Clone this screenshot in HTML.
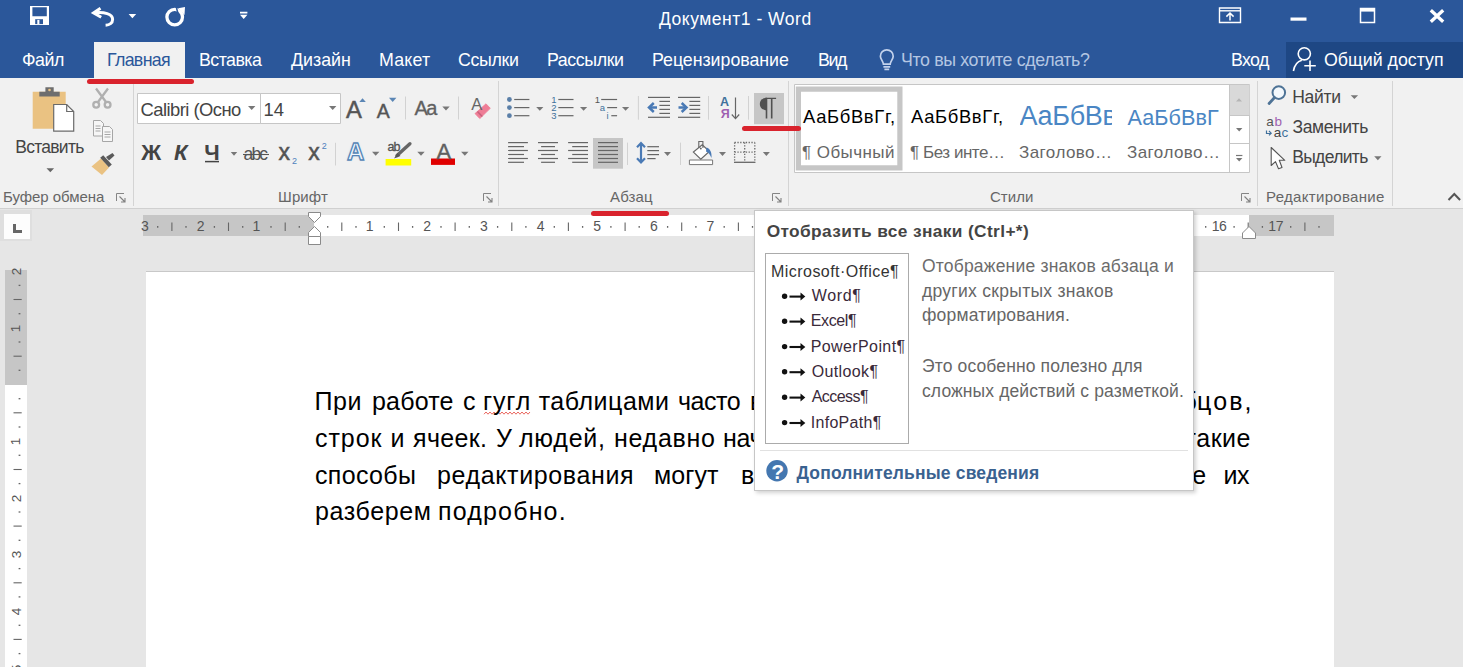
<!DOCTYPE html>
<html lang="ru"><head><meta charset="utf-8"><title>Документ1 - Word</title>
<style>
*{margin:0;padding:0;box-sizing:border-box}
html,body{width:1463px;height:667px;overflow:hidden;background:#e6e6e6;font-family:"Liberation Sans",sans-serif}
.a{position:absolute}
.t{position:absolute;white-space:pre;line-height:1;display:block}
.red{position:absolute;background:#d9232d;border-radius:3px}
.sep{position:absolute;width:1px;background:#d4d4d4}
.isep{position:absolute;width:1px;background:#d0d0d0}
svg{position:absolute;overflow:visible}
</style></head>
<body>
<div class="a" style="left:0;top:0;width:1463px;height:77.5px;background:#2b579a"></div>
<div class="a" style="left:94px;top:42px;width:91px;height:36px;background:#f1f1f1"></div>
<div class="a" style="left:1286px;top:42px;width:177px;height:35.5px;background:#1e4784"></div>
<div class="a" style="left:0;top:77.5px;width:1463px;height:131.5px;background:#f1f1f1;border-bottom:1px solid #d0d0d0"></div>
<div class="sep" style="left:132.5px;top:81px;height:124.5px"></div>
<div class="sep" style="left:498px;top:81px;height:124.5px"></div>
<div class="sep" style="left:787.5px;top:81px;height:124.5px"></div>
<div class="sep" style="left:1257px;top:81px;height:124.5px"></div>
<div class="sep" style="left:1392px;top:81px;height:124.5px"></div>
<svg width="1463" height="667" viewBox="0 0 1463 667" style="left:0;top:0"><path d="M30 6h19v19h-19z M32.4 7.2v9h14.4v-9z" fill="#fff" fill-rule="evenodd"/><path d="M35.2 19.2h7.800v4.900h-7.800z" fill="#2b579a"/><path d="M37.300 19.900h2.100v4.200h-2.100z" fill="#fff"/><path d="M100.5 8.2 L93.6 12.8 L101.2 17.2" fill="none" stroke="#fff" stroke-width="3" stroke-linejoin="miter"/><path d="M95 12.8 C104 11.8 112.6 13.8 112.6 19.4 C112.6 23 109.5 25 105.6 25.2" fill="none" stroke="#fff" stroke-width="3"/><path d="M128.6 14h7.6l-3.8 4.2z" fill="#fff"/><circle cx="174.700" cy="17.100" r="7.800" fill="none" stroke="#fff" stroke-width="3.300"/><path d="M178.300 8.200L185 7 184.500 15Z" fill="#fff"/><path d="M176.500 8l2 7.200" stroke="#2b579a" stroke-width="1.500"/><path d="M240 11.8h7.4v1.6h-7.4z M240 14.8h7.4l-3.7 4.2z" fill="#fff"/><path d="M1219.5 8h21v14.5h-21z" fill="none" stroke="#fff" stroke-width="1.4"/><path d="M1219.5 10.8h21" stroke="#fff" stroke-width="1.4"/><path d="M1230 13.2v7.2 M1226.4 16.6l3.6-3.6 3.6 3.6" fill="none" stroke="#fff" stroke-width="1.5"/><path d="M1290.5 17.5h16v3.2h-16z" fill="#fff"/><path d="M1360.5 8.5h14v14h-14z" fill="none" stroke="#fff" stroke-width="1.5"/><path d="M1360 8h15v3.6h-15z" fill="#fff"/><path d="M1430.800 10.200l12.400 11.600M1443.200 10.200l-12.400 11.600" stroke="#fff" stroke-width="3.300"/><path d="M886.800 49.800a6.400 6.400 0 0 1 6.400 6.400c0 3-2.600 4.600-3 8h-6.800c-.400-3.400-3-5-3-8a6.400 6.400 0 0 1 6.400-6.400z" fill="none" stroke="#c3d2ec" stroke-width="1.700"/><path d="M883.400 66.900h6.800M884.400 69.300h4.800" stroke="#c3d2ec" stroke-width="1.700"/><circle cx="1304.300" cy="53.800" r="6.100" fill="none" stroke="#fff" stroke-width="1.600"/><path d="M1293.400 71c1-6 4-9.600 8.400-10.800" fill="none" stroke="#fff" stroke-width="1.600"/><path d="M1310 60.500v10.500M1304.300 65.700h11.500" stroke="#fff" stroke-width="1.600"/><path d="M32.700 91.7h33v37h-33z" fill="#eac282"/><path d="M39.300 91.7h20.400v4.800h-20.400z M45.400 87.200h8.300v4.600h-8.300z" fill="#6e6e6e"/><circle cx="49.500" cy="90" r="1.3" fill="#eac282"/><path d="M53.700 104.500h13l7 7v19.700h-20z" fill="#fff" stroke="#6a6a6a" stroke-width="1.2"/><path d="M66.700 104.500v7h7" fill="none" stroke="#6a6a6a" stroke-width="1.2"/><path d="M46.5 168.3h7.6l-3.8 4z" fill="#666"/><g fill="none" stroke="#b0b0b0" stroke-width="2.300"><path d="M96 88.500l10 13.500M108 88.500l-10 13.500"/><circle cx="96.200" cy="104.800" r="2.900"/><circle cx="107.600" cy="104.800" r="2.900"/></g><g fill="#f6f6f6" stroke="#a6a6a6" stroke-width="1"><path d="M93.500 120.500h7l3 3v12.500h-10z"/><path d="M102.500 126.500h7l3 3v12h-10z"/></g><path d="M95.500 126h5M95.500 128.500h5M95.500 131h5M104.500 132h6M104.500 134.500h6M104.500 137h6" stroke="#a6a6a6" stroke-width="1"/><path d="M91.500 166.500l9.500-8 8 9-7 7.500z" fill="#eac282"/><path d="M100.200 157.800l3-2.600 8.600 9.400-3 2.600z" fill="#5a5a5a"/><path d="M106 157l6.500-4 2 2.500-5.500 5z" fill="#5a5a5a"/><path d="M124 193.5h-7.500v7.500" fill="none" stroke="#858585" stroke-width="1"/><path d="M119.5 196.5l5 5M125 198v4h-4" fill="none" stroke="#808080" stroke-width="1.100"/><path d="M491 193.5h-7.500v7.500" fill="none" stroke="#858585" stroke-width="1"/><path d="M486.5 196.5l5 5M492 198v4h-4" fill="none" stroke="#808080" stroke-width="1.100"/><path d="M780 193.5h-7.500v7.500" fill="none" stroke="#858585" stroke-width="1"/><path d="M775.5 196.5l5 5M781 198v4h-4" fill="none" stroke="#808080" stroke-width="1.100"/><path d="M1249 193.5h-7.500v7.500" fill="none" stroke="#858585" stroke-width="1"/><path d="M1244.5 196.5l5 5M1250 198v4h-4" fill="none" stroke="#808080" stroke-width="1.100"/><path d="M1448.500 200l5.800-6 5.800 6" fill="none" stroke="#555" stroke-width="2"/><path d="M137.500 93.500h123v30h-123z M260.500 93.500h80v30h-80z" fill="#fff" stroke="#c6c6c6" stroke-width="1"/><path d="M248 106h7.4l-3.7 3.9z" fill="#777"/><path d="M329 106h7.4l-3.7 3.9z" fill="#777"/><path d="M359.300 101.900l3.250-3.700 3.250 3.700z" fill="#5b86b5"/><path d="M389 97.800h7.400l-3.700 4.100z" fill="#5b86b5"/><path d="M405.5 96.5V119.5" stroke="#d2d2d2" stroke-width="1"/><path d="M442.3 106.6h7.4l-3.7 4z" fill="#777"/><path d="M458.5 96.5V119.5" stroke="#d2d2d2" stroke-width="1"/><path d="M486 103.800L490.300 108.300 479.800 118.600 475 113.600z" fill="#ee7d96" stroke="#ee7d96" stroke-width="0.800" stroke-linejoin="round"/><path d="M476.900 111.900L478 110.900 482.800 115.900 481.700 116.900z" fill="#c8607c"/><path d="M205 161.6H219" stroke="#444" stroke-width="1.5"/><path d="M230.8 152h6.4l-3.2 3.8z" fill="#777"/><path d="M243 154.5H269" stroke="#555" stroke-width="1.1"/><path d="M335.5 142.8V165.5" stroke="#d2d2d2" stroke-width="1"/><path d="M372 151.8h7.4l-3.7 4z" fill="#777"/><path d="M409.900 143.700L397 155.500" stroke="#666" stroke-width="3.400" stroke-linecap="round"/><path d="M397.500 153l3 3-6.500 2.500z" fill="#555"/><path d="M385.600 159h25.600v6.500h-25.600z" fill="#ffff00"/><path d="M417.3 151.8h7.4l-3.7 4z" fill="#777"/><path d="M431 158.500h24v6.400h-24z" fill="#e00000"/><path d="M461.1 151.8h7.4l-3.7 4z" fill="#777"/><circle cx="509.400" cy="99.5" r="2.400" fill="#5a7fa8"/><path d="M514.2 99.5H529.4" stroke="#666666" stroke-width="1.2"/><path d="M558.3 99.5H573.5" stroke="#666666" stroke-width="1.2"/><circle cx="509.400" cy="107.6" r="2.400" fill="#5a7fa8"/><path d="M514.2 107.6H529.4" stroke="#666666" stroke-width="1.2"/><path d="M558.3 107.6H573.5" stroke="#666666" stroke-width="1.2"/><circle cx="509.400" cy="115.7" r="2.400" fill="#5a7fa8"/><path d="M514.2 115.7H529.4" stroke="#666666" stroke-width="1.2"/><path d="M558.3 115.7H573.5" stroke="#666666" stroke-width="1.2"/><path d="M536.2 106.9h7.2l-3.6 3.9z" fill="#777"/><path d="M580 106.9h7.2l-3.6 3.9z" fill="#777"/><path d="M601.2 99.5H617.1" stroke="#666666" stroke-width="1.2"/><path d="M607.2 107.6H617.1" stroke="#666666" stroke-width="1.2"/><path d="M611.3 115.7H617.1" stroke="#666666" stroke-width="1.2"/><path d="M622 106.9h7.2l-3.6 3.9z" fill="#777"/><path d="M638.4 96V119.7" stroke="#d2d2d2" stroke-width="1"/><path d="M648 97.4H670" stroke="#666666" stroke-width="1.2"/><path d="M648 117.3H670" stroke="#666666" stroke-width="1.2"/><path d="M659.4 101.4H670" stroke="#666666" stroke-width="1.2"/><path d="M689.4 101.4H700.2" stroke="#666666" stroke-width="1.2"/><path d="M659.4 105.4H670" stroke="#666666" stroke-width="1.2"/><path d="M689.4 105.4H700.2" stroke="#666666" stroke-width="1.2"/><path d="M659.4 109.4H670" stroke="#666666" stroke-width="1.2"/><path d="M689.4 109.4H700.2" stroke="#666666" stroke-width="1.2"/><path d="M659.4 113.4H670" stroke="#666666" stroke-width="1.2"/><path d="M689.4 113.4H700.2" stroke="#666666" stroke-width="1.2"/><path d="M678 97.4H700.2" stroke="#666666" stroke-width="1.2"/><path d="M678 117.3H700.2" stroke="#666666" stroke-width="1.2"/><path d="M657 107.500h-7" stroke="#4a7ab5" stroke-width="2.500"/><path d="M653.800 103l-4.800 4.500 4.800 4.500" fill="none" stroke="#4a7ab5" stroke-width="2.500"/><path d="M678.500 107.500h7" stroke="#4a7ab5" stroke-width="2.500"/><path d="M681.700 103l4.800 4.500-4.800 4.500" fill="none" stroke="#4a7ab5" stroke-width="2.500"/><path d="M708.5 96V119.7" stroke="#d2d2d2" stroke-width="1"/><path d="M735.500 97.400V118.500M731.800 114.500l3.700 4.200 3.700-4.200" fill="none" stroke="#666" stroke-width="1.200"/><path d="M748.5 96V119.7" stroke="#d2d2d2" stroke-width="1"/><path d="M754 93h30v31.200h-30z" fill="#c6c6c6"/><path d="M766 97.700h10.100v1.300h-10.100z M765.700 97.700h1.600v20.700h-1.600z M770.900 97.700h1.600v20.700h-1.600z" fill="#505050"/><path d="M767 97.700c-5 0-7.200 3-7.200 6.300s2.200 6.300 7.200 6.300z" fill="#505050"/><path d="M593 138h30v30.700h-30z" fill="#c6c6c6"/><path d="M508.1 142.6H527.9" stroke="#666666" stroke-width="1.2"/><path d="M538 142.6H558" stroke="#666666" stroke-width="1.2"/><path d="M568.1 142.6H588" stroke="#666666" stroke-width="1.2"/><path d="M598 142.6H618" stroke="#666666" stroke-width="1.2"/><path d="M508.1 146.6H524" stroke="#666666" stroke-width="1.2"/><path d="M541.1 146.6H555" stroke="#666666" stroke-width="1.2"/><path d="M572.2 146.6H588" stroke="#666666" stroke-width="1.2"/><path d="M598 146.6H618" stroke="#666666" stroke-width="1.2"/><path d="M508.1 150.5H527.9" stroke="#666666" stroke-width="1.2"/><path d="M538 150.5H558" stroke="#666666" stroke-width="1.2"/><path d="M568.1 150.5H588" stroke="#666666" stroke-width="1.2"/><path d="M598 150.5H618" stroke="#666666" stroke-width="1.2"/><path d="M508.1 154.5H524" stroke="#666666" stroke-width="1.2"/><path d="M541.1 154.5H555" stroke="#666666" stroke-width="1.2"/><path d="M572.2 154.5H588" stroke="#666666" stroke-width="1.2"/><path d="M598 154.5H618" stroke="#666666" stroke-width="1.2"/><path d="M508.1 158.5H527.9" stroke="#666666" stroke-width="1.2"/><path d="M538 158.5H558" stroke="#666666" stroke-width="1.2"/><path d="M568.1 158.5H588" stroke="#666666" stroke-width="1.2"/><path d="M598 158.5H618" stroke="#666666" stroke-width="1.2"/><path d="M508.1 162.3H524" stroke="#666666" stroke-width="1.2"/><path d="M541.1 162.3H555" stroke="#666666" stroke-width="1.2"/><path d="M572.2 162.3H588" stroke="#666666" stroke-width="1.2"/><path d="M598 162.3H618" stroke="#666666" stroke-width="1.2"/><path d="M627.5 142.6V165" stroke="#d2d2d2" stroke-width="1"/><path d="M641 143.500V162M637 147.200l4-4.200 4 4.200M637 158.300l4 4.200 4-4.200" fill="none" stroke="#4a7ab5" stroke-width="2.200"/><path d="M647.3 146.7H659" stroke="#666666" stroke-width="1.2"/><path d="M647.3 150.6H659" stroke="#666666" stroke-width="1.2"/><path d="M647.3 154.6H659" stroke="#666666" stroke-width="1.2"/><path d="M647.3 158.6H655.6" stroke="#666666" stroke-width="1.2"/><path d="M664 152.1h7l-3.5 3.9z" fill="#777"/><path d="M680.5 142.6V165" stroke="#d2d2d2" stroke-width="1"/><path d="M689.400 160h23.200v4.600h-23.200z" fill="#fff" stroke="#777" stroke-width="1"/><path d="M702.200 144.700l7.100 6.700-8.500 7.800-7.400-7.100z" fill="#fff" stroke="#666" stroke-width="1.200"/><path d="M698.800 148v-6.500h4.100v6.500" fill="none" stroke="#666" stroke-width="1.100"/><circle cx="700.800" cy="148.600" r="1" fill="#666"/><path d="M706.500 147.500c3.500 1 5.500 4.500 5 10.500-1.500-3.500-3-5.500-5.500-6.500z" fill="#4a7ab5"/><path d="M719 152.1h7l-3.5 3.9z" fill="#777"/><path d="M734.600 142.500h20.200M734.600 142.500v19.700M754.800 142.500v19.700M744.700 142.500v19.700M734.600 152.100h20.200" fill="none" stroke="#6a6a6a" stroke-width="1.300" stroke-dasharray="1.300 1.500"/><path d="M734 162.3H755.4" stroke="#666" stroke-width="1.3"/><path d="M762.9 152.1h7l-3.5 3.9z" fill="#777"/><path d="M794.500 84.500h455v88h-455z" fill="#fff" stroke="#c6c6c6" stroke-width="1"/><path d="M798.400 89.100h101.500v78.800h-101.500z" fill="#fff" stroke="#c6c6c6" stroke-width="5.200"/><path d="M1229.500 85h20v30.500h-20z" fill="#d9d9d9"/><path d="M1229.500 84.500v88M1229.500 115.500h20M1229.500 143.500h20" fill="none" stroke="#c6c6c6" stroke-width="1"/><path d="M1236 101.500h6l-3-3.300z" fill="#b5b5b5"/><path d="M1236 128h6.4l-3.2 3.6z" fill="#777"/><path d="M1236 158h6.4l-3.2 3.6z" fill="#777"/><path d="M1236 155.5H1242.4" stroke="#777" stroke-width="1.2"/><circle cx="1278.800" cy="92.600" r="6.300" fill="#f3f8fc" stroke="#4e7396" stroke-width="2"/><path d="M1274.300 97.700l-5.200 5.800" stroke="#4e7396" stroke-width="2.800" stroke-linecap="round"/><path d="M1350.7 95.2h7.4l-3.7 3.9z" fill="#777"/><path d="M1266.500 130.500v3h4.500M1269 131l2.200 2.200-2.200 2.200" fill="none" stroke="#41719c" stroke-width="1.200"/><path d="M1271.200 147.500v18l4.300-3.900 3 7.200 3.500-1.300-2.700-7.200h5.500z" fill="#fff" stroke="#555" stroke-width="1.100" stroke-linejoin="round"/><path d="M1374.2 156.2h7.3l-3.65 4z" fill="#777"/></svg>
<div class="a" style="left:0px;top:210px;width:32px;height:31px;background:#dfdfdf"></div><div class="a" style="left:4px;top:213.800px;width:25.700px;height:25px;background:#fdfdfd"></div>
<div class="a" style="left:12.800px;top:224.200px;width:3.200px;height:8.500px;background:#666"></div><div class="a" style="left:12.800px;top:230.200px;width:9.100px;height:2.500px;background:#666"></div>
<div class="a" style="left:143px;top:215px;width:1191px;height:21px;background:#fff"></div>
<div class="a" style="left:143px;top:215px;width:171px;height:21px;background:#c6c6c6"></div>
<div class="a" style="left:1249px;top:215px;width:85px;height:21px;background:#c6c6c6"></div>
<div class="a" style="left:146px;top:271px;width:1188px;height:400px;background:#fff;border-top:1px solid #c8c8c8"></div>
<div class="a" style="left:5.4px;top:269.5px;width:21.6px;height:400px;background:#fff"></div>
<div class="a" style="left:5.4px;top:269.5px;width:21.6px;height:115.5px;background:#c6c6c6"></div>
<svg width="1463" height="667" viewBox="0 0 1463 667" style="left:0;top:0"><path d="M157.7 226v1.8" stroke="#666" stroke-width="1.3"/><path d="M171.9 222.5v8.5" stroke="#666" stroke-width="1.1"/><path d="M186.0 226v1.8" stroke="#666" stroke-width="1.3"/><path d="M214.4 226v1.8" stroke="#666" stroke-width="1.3"/><path d="M228.5 222.5v8.5" stroke="#666" stroke-width="1.1"/><path d="M242.7 226v1.8" stroke="#666" stroke-width="1.3"/><path d="M271.0 226v1.8" stroke="#666" stroke-width="1.3"/><path d="M285.2 222.5v8.5" stroke="#666" stroke-width="1.1"/><path d="M299.3 226v1.8" stroke="#666" stroke-width="1.3"/><path d="M327.7 226v1.8" stroke="#666" stroke-width="1.3"/><path d="M341.8 222.5v8.5" stroke="#666" stroke-width="1.1"/><path d="M356.0 226v1.8" stroke="#666" stroke-width="1.3"/><path d="M384.3 226v1.8" stroke="#666" stroke-width="1.3"/><path d="M398.5 222.5v8.5" stroke="#666" stroke-width="1.1"/><path d="M412.6 226v1.8" stroke="#666" stroke-width="1.3"/><path d="M441.0 226v1.8" stroke="#666" stroke-width="1.3"/><path d="M455.1 222.5v8.5" stroke="#666" stroke-width="1.1"/><path d="M469.3 226v1.8" stroke="#666" stroke-width="1.3"/><path d="M497.6 226v1.8" stroke="#666" stroke-width="1.3"/><path d="M511.8 222.5v8.5" stroke="#666" stroke-width="1.1"/><path d="M525.9 226v1.8" stroke="#666" stroke-width="1.3"/><path d="M554.3 226v1.8" stroke="#666" stroke-width="1.3"/><path d="M568.4 222.5v8.5" stroke="#666" stroke-width="1.1"/><path d="M582.6 226v1.8" stroke="#666" stroke-width="1.3"/><path d="M610.9 226v1.8" stroke="#666" stroke-width="1.3"/><path d="M625.1 222.5v8.5" stroke="#666" stroke-width="1.1"/><path d="M639.2 226v1.8" stroke="#666" stroke-width="1.3"/><path d="M667.6 226v1.8" stroke="#666" stroke-width="1.3"/><path d="M681.7 222.5v8.5" stroke="#666" stroke-width="1.1"/><path d="M695.9 226v1.8" stroke="#666" stroke-width="1.3"/><path d="M724.2 226v1.8" stroke="#666" stroke-width="1.3"/><path d="M738.4 222.5v8.5" stroke="#666" stroke-width="1.1"/><path d="M752.5 226v1.8" stroke="#666" stroke-width="1.3"/><path d="M780.9 226v1.8" stroke="#666" stroke-width="1.3"/><path d="M795.0 222.5v8.5" stroke="#666" stroke-width="1.1"/><path d="M809.2 226v1.8" stroke="#666" stroke-width="1.3"/><path d="M837.5 226v1.8" stroke="#666" stroke-width="1.3"/><path d="M851.7 222.5v8.5" stroke="#666" stroke-width="1.1"/><path d="M865.8 226v1.8" stroke="#666" stroke-width="1.3"/><path d="M894.2 226v1.8" stroke="#666" stroke-width="1.3"/><path d="M908.3 222.5v8.5" stroke="#666" stroke-width="1.1"/><path d="M922.5 226v1.8" stroke="#666" stroke-width="1.3"/><path d="M950.8 226v1.8" stroke="#666" stroke-width="1.3"/><path d="M965.0 222.5v8.5" stroke="#666" stroke-width="1.1"/><path d="M979.1 226v1.8" stroke="#666" stroke-width="1.3"/><path d="M1007.5 226v1.8" stroke="#666" stroke-width="1.3"/><path d="M1021.6 222.5v8.5" stroke="#666" stroke-width="1.1"/><path d="M1035.8 226v1.8" stroke="#666" stroke-width="1.3"/><path d="M1064.1 226v1.8" stroke="#666" stroke-width="1.3"/><path d="M1078.3 222.5v8.5" stroke="#666" stroke-width="1.1"/><path d="M1092.4 226v1.8" stroke="#666" stroke-width="1.3"/><path d="M1120.8 226v1.8" stroke="#666" stroke-width="1.3"/><path d="M1134.9 222.5v8.5" stroke="#666" stroke-width="1.1"/><path d="M1149.1 226v1.8" stroke="#666" stroke-width="1.3"/><path d="M1177.4 226v1.8" stroke="#666" stroke-width="1.3"/><path d="M1191.6 222.5v8.5" stroke="#666" stroke-width="1.1"/><path d="M1205.7 226v1.8" stroke="#666" stroke-width="1.3"/><path d="M1234.1 226v1.8" stroke="#666" stroke-width="1.3"/><path d="M1248.2 222.5v8.5" stroke="#666" stroke-width="1.1"/><path d="M1262.4 226v1.8" stroke="#666" stroke-width="1.3"/><path d="M1290.7 226v1.8" stroke="#666" stroke-width="1.3"/><path d="M1304.9 222.5v8.5" stroke="#666" stroke-width="1.1"/><path d="M1319.0 226v1.8" stroke="#666" stroke-width="1.3"/><path d="M18.6 285.4h1.8" stroke="#666" stroke-width="1.3"/><path d="M13.5 299.5h8.2" stroke="#666" stroke-width="1.1"/><path d="M18.6 313.7h1.8" stroke="#666" stroke-width="1.3"/><path d="M18.6 342.0h1.8" stroke="#666" stroke-width="1.3"/><path d="M13.5 356.2h8.2" stroke="#666" stroke-width="1.1"/><path d="M18.6 370.3h1.8" stroke="#666" stroke-width="1.3"/><path d="M18.6 398.7h1.8" stroke="#666" stroke-width="1.3"/><path d="M13.5 412.8h8.2" stroke="#666" stroke-width="1.1"/><path d="M18.6 427.0h1.8" stroke="#666" stroke-width="1.3"/><path d="M18.6 455.3h1.8" stroke="#666" stroke-width="1.3"/><path d="M13.5 469.5h8.2" stroke="#666" stroke-width="1.1"/><path d="M18.6 483.6h1.8" stroke="#666" stroke-width="1.3"/><path d="M18.6 512.0h1.8" stroke="#666" stroke-width="1.3"/><path d="M13.5 526.1h8.2" stroke="#666" stroke-width="1.1"/><path d="M18.6 540.3h1.8" stroke="#666" stroke-width="1.3"/><path d="M18.6 568.6h1.8" stroke="#666" stroke-width="1.3"/><path d="M13.5 582.8h8.2" stroke="#666" stroke-width="1.1"/><path d="M18.6 596.9h1.8" stroke="#666" stroke-width="1.3"/><path d="M18.6 625.3h1.8" stroke="#666" stroke-width="1.3"/><path d="M13.5 639.4h8.2" stroke="#666" stroke-width="1.1"/><path d="M18.6 653.6h1.8" stroke="#666" stroke-width="1.3"/><path d="M308.5 212.5h12v4l-6 6-6-6z" fill="#fff" stroke="#8a8a8a" stroke-width="1"/><path d="M308.5 236.5v-4l6-6 6 6v4z" fill="#fff" stroke="#8a8a8a" stroke-width="1"/><path d="M308.5 236.500h12v8h-12z" fill="#fff" stroke="#8a8a8a" stroke-width="1"/><path d="M1242.500 238.500v-5.500l6.500-6.500 6.500 6.500v5.500z" fill="#fff" stroke="#8a8a8a" stroke-width="1"/></svg>
<svg width="1463" height="667" viewBox="0 0 1463 667" style="left:0;top:0"><path d="M484 414.200l2 -2.200l2 2.200l2 -2.200l2 2.200l2 -2.200l2 2.200l2 -2.200l2 2.200l2 -2.200l2 2.200l2 -2.200l2 2.200l2 -2.200l2 2.200l2 -2.200l2 2.200l2 -2.200l2 2.200l2 -2.200l2 2.200l2 -2.200l2 2.200l2 -2.200" fill="none" stroke="#e8574e" stroke-width="0.9"/></svg>
<span class="t" style="left:659.00px;top:11px;font-size:17.5px;letter-spacing:0.515px;color:#fff;">Документ1 - Word</span>
<span class="t" style="left:22.00px;top:52px;font-size:17.8px;letter-spacing:-0.447px;color:#fff;">Файл</span>
<span class="t" style="left:107.00px;top:52px;font-size:17.8px;letter-spacing:-0.675px;color:#2b579a;">Главная</span>
<span class="t" style="left:199.00px;top:52px;font-size:17.8px;letter-spacing:-0.533px;color:#fff;">Вставка</span>
<span class="t" style="left:291.00px;top:52px;font-size:17.8px;letter-spacing:0.010px;color:#fff;">Дизайн</span>
<span class="t" style="left:379.00px;top:52px;font-size:17.8px;letter-spacing:0.205px;color:#fff;">Макет</span>
<span class="t" style="left:458.00px;top:52px;font-size:17.8px;letter-spacing:-0.333px;color:#fff;">Ссылки</span>
<span class="t" style="left:547.00px;top:52px;font-size:17.8px;letter-spacing:-0.411px;color:#fff;">Рассылки</span>
<span class="t" style="left:652.00px;top:52px;font-size:17.8px;letter-spacing:-0.032px;color:#fff;">Рецензирование</span>
<span class="t" style="left:818.00px;top:52px;font-size:17.8px;letter-spacing:-1.396px;color:#fff;">Вид</span>
<span class="t" style="left:901.00px;top:52px;font-size:17.8px;letter-spacing:-0.366px;color:#b4c6e2;">Что вы хотите сделать?</span>
<span class="t" style="left:1231.00px;top:52px;font-size:17.8px;letter-spacing:-0.616px;color:#fff;">Вход</span>
<span class="t" style="left:1324.00px;top:52px;font-size:17.8px;letter-spacing:0.015px;color:#fff;">Общий доступ</span>
<span class="t" style="left:3.00px;top:189px;font-size:15px;letter-spacing:-0.053px;color:#666666;">Буфер обмена</span>
<span class="t" style="left:278.00px;top:189px;font-size:15px;letter-spacing:0.130px;color:#666666;">Шрифт</span>
<span class="t" style="left:610.00px;top:189px;font-size:15px;letter-spacing:0.128px;color:#666666;">Абзац</span>
<span class="t" style="left:990.00px;top:189px;font-size:15px;letter-spacing:0.042px;color:#666666;">Стили</span>
<span class="t" style="left:1266.00px;top:189px;font-size:15px;letter-spacing:0.314px;color:#666666;">Редактирование</span>
<span class="t" style="left:15.20px;top:139px;font-size:17.5px;letter-spacing:-0.723px;color:#444444;">Вставить</span>
<span class="t" style="left:140.50px;top:101px;font-size:18.4px;letter-spacing:-0.542px;color:#444444;">Calibri (Осно</span>
<span class="t" style="left:263.60px;top:101px;font-size:18.4px;color:#444444;">14</span>
<span class="t" style="left:803.00px;top:108px;font-size:18.4px;letter-spacing:0.655px;color:#000;">АаБбВвГг,</span>
<span class="t" style="left:802.00px;top:144px;font-size:17px;letter-spacing:0.438px;color:#666666;">¶ Обычный</span>
<span class="t" style="left:911.00px;top:108px;font-size:18.4px;letter-spacing:0.655px;color:#000;">АаБбВвГг,</span>
<span class="t" style="left:910.00px;top:144px;font-size:17px;letter-spacing:-0.454px;color:#666666;">¶ Без инте…</span>
<span class="t" style="left:1019.50px;top:103px;font-size:27px;color:#4a86c4;width:92px;overflow:hidden;letter-spacing:-0.3px;">АаБбВв</span>
<span class="t" style="left:1019.00px;top:144px;font-size:17px;letter-spacing:0.439px;color:#666666;">Заголово…</span>
<span class="t" style="left:1127.50px;top:107px;font-size:21.6px;letter-spacing:0.072px;color:#4a86c4;">АаБбВвГ</span>
<span class="t" style="left:1127.00px;top:144px;font-size:17px;letter-spacing:0.439px;color:#666666;">Заголово…</span>
<span class="t" style="left:1292.30px;top:89px;font-size:17.5px;letter-spacing:-0.315px;color:#444444;">Найти</span>
<span class="t" style="left:1292.60px;top:119px;font-size:17.5px;letter-spacing:-0.417px;color:#444444;">Заменить</span>
<span class="t" style="left:1292.20px;top:149px;font-size:17.5px;letter-spacing:-0.659px;color:#444444;">Выделить</span>
<span class="t" style="left:346.00px;top:98px;font-size:23.8px;color:#555;-webkit-text-stroke:0.5px #555;">A</span>
<span class="t" style="left:376.80px;top:102px;font-size:19.5px;letter-spacing:-0.200px;color:#555;-webkit-text-stroke:0.4px #555;">A</span>
<span class="t" style="left:414.60px;top:98px;font-size:20px;letter-spacing:-1.740px;color:#606060;-webkit-text-stroke:0.3px #606060;">Aa</span>
<span class="t" style="left:471.30px;top:96px;font-size:16.5px;letter-spacing:-0.900px;color:#666;">A</span>
<span class="t" style="left:141.20px;top:142px;font-size:22px;letter-spacing:1.400px;color:#444;font-weight:700;">Ж</span>
<span class="t" style="left:174.00px;top:142px;font-size:22px;letter-spacing:0.600px;color:#444;font-weight:700;font-style:italic;">К</span>
<span class="t" style="left:204.20px;top:142px;font-size:22px;letter-spacing:0.200px;color:#444;font-weight:700;">Ч</span>
<span class="t" style="left:243.60px;top:146px;font-size:17.5px;letter-spacing:-1.933px;color:#555;">abc</span>
<span class="t" style="left:278.40px;top:141px;font-size:23px;letter-spacing:0.100px;color:#555;-webkit-text-stroke:0.500px #555;">x</span>
<span class="t" style="left:292.00px;top:157px;font-size:9px;letter-spacing:-0.400px;color:#4f81bd;">2</span>
<span class="t" style="left:308.30px;top:141px;font-size:23px;letter-spacing:-0.600px;color:#555;-webkit-text-stroke:0.500px #555;">x</span>
<span class="t" style="left:321.80px;top:142px;font-size:9px;letter-spacing:-0.300px;color:#4f81bd;">2</span>
<span class="t" style="left:347.00px;top:140px;font-size:24px;color:#eef5fc;font-weight:700;-webkit-text-stroke:1.3px #5585b5;text-shadow:0 0 3px #cfe2f3,0 0 2px #cfe2f3;">A</span>
<span class="t" style="left:387.60px;top:141px;font-size:12.5px;letter-spacing:-0.952px;color:#505050;-webkit-text-stroke:0.3px #505050;">ab</span>
<span class="t" style="left:436.40px;top:141px;font-size:22px;letter-spacing:-1.600px;color:#606060;-webkit-text-stroke:0.4px #606060;">A</span>
<span class="t" style="left:551.30px;top:95px;font-size:9.5px;letter-spacing:-1.000px;color:#41719c;">1</span>
<span class="t" style="left:551.30px;top:103px;font-size:9.5px;letter-spacing:-1.000px;color:#41719c;">2</span>
<span class="t" style="left:551.30px;top:111px;font-size:9.5px;letter-spacing:-1.000px;color:#41719c;">3</span>
<span class="t" style="left:594.80px;top:95px;font-size:9.5px;letter-spacing:-0.800px;color:#555;">1</span>
<span class="t" style="left:599.80px;top:103px;font-size:9.5px;letter-spacing:-1.700px;color:#41719c;">a</span>
<span class="t" style="left:606.60px;top:111px;font-size:9.5px;letter-spacing:0.400px;color:#41719c;">i</span>
<span class="t" style="left:720.10px;top:96px;font-size:12.5px;letter-spacing:1.000px;color:#41719c;font-weight:700;">A</span>
<span class="t" style="left:720.80px;top:108px;font-size:12.5px;letter-spacing:-1.300px;color:#9e5fb0;font-weight:700;">Я</span>
<span class="t" style="left:1266.20px;top:115px;font-size:13.5px;letter-spacing:-0.700px;color:#555;">a</span>
<span class="t" style="left:1274.50px;top:115px;font-size:13.5px;letter-spacing:1.200px;color:#9e5fb0;">b</span>
<span class="t" style="left:1273.70px;top:126px;font-size:13.5px;letter-spacing:-0.700px;color:#444;">a</span>
<span class="t" style="left:1281.50px;top:126px;font-size:13.5px;letter-spacing:-0.500px;color:#41719c;">c</span>
<span class="t" style="left:314.40px;top:389px;font-size:25px;letter-spacing:0.564px;color:#000;">При</span>
<span class="t" style="left:372.00px;top:389px;font-size:25px;letter-spacing:0.190px;color:#000;">работе</span>
<span class="t" style="left:463.00px;top:389px;font-size:25px;letter-spacing:-1.000px;color:#000;">с</span>
<span class="t" style="left:483.00px;top:389px;font-size:25px;letter-spacing:0.871px;color:#000;">гугл</span>
<span class="t" style="left:538.70px;top:389px;font-size:25px;letter-spacing:0.509px;color:#000;">таблицами</span>
<span class="t" style="left:678.00px;top:389px;font-size:25px;letter-spacing:-0.475px;color:#000;">часто</span>
<span class="t" style="left:750.00px;top:389px;font-size:25px;letter-spacing:1.085px;color:#000;">возникает</span>
<span class="t" style="left:1129.00px;top:389px;font-size:25px;letter-spacing:0.325px;color:#000;">стол</span>
<span class="t" style="left:1182.50px;top:389px;font-size:25px;letter-spacing:-0.700px;color:#000;">б</span>
<span class="t" style="left:1197.00px;top:389px;font-size:25px;letter-spacing:2.126px;color:#000;">цов,</span>
<span class="t" style="left:315.00px;top:426px;font-size:25px;letter-spacing:0.936px;color:#000;">строк</span>
<span class="t" style="left:390.50px;top:426px;font-size:25px;letter-spacing:-1.500px;color:#000;">и</span>
<span class="t" style="left:413.00px;top:426px;font-size:25px;letter-spacing:0.338px;color:#000;">ячеек.</span>
<span class="t" style="left:496.00px;top:426px;font-size:25px;letter-spacing:-4.000px;color:#000;">У</span>
<span class="t" style="left:519.00px;top:426px;font-size:25px;letter-spacing:0.751px;color:#000;">людей,</span>
<span class="t" style="left:614.00px;top:426px;font-size:25px;letter-spacing:0.710px;color:#000;">недавно</span>
<span class="t" style="left:723.00px;top:426px;font-size:25px;letter-spacing:-0.342px;color:#000;">начавших</span>
<span class="t" style="left:1184.50px;top:426px;font-size:25px;letter-spacing:0.531px;color:#000;">такие</span>
<span class="t" style="left:315.00px;top:463px;font-size:25px;letter-spacing:0.343px;color:#000;">способы</span>
<span class="t" style="left:437.00px;top:463px;font-size:25px;letter-spacing:0.626px;color:#000;">редактирования</span>
<span class="t" style="left:654.00px;top:463px;font-size:25px;letter-spacing:0.073px;color:#000;">могут</span>
<span class="t" style="left:741.00px;top:463px;font-size:25px;letter-spacing:0.247px;color:#000;">вызвать</span>
<span class="t" style="left:1192.20px;top:463px;font-size:25px;letter-spacing:0.700px;color:#000;">е</span>
<span class="t" style="left:1223.40px;top:463px;font-size:25px;letter-spacing:-0.365px;color:#000;">их</span>
<span class="t" style="left:315.00px;top:499px;font-size:25px;letter-spacing:0.606px;color:#000;">разберем</span>
<span class="t" style="left:438.00px;top:499px;font-size:25px;letter-spacing:1.173px;color:#000;">подробно.</span>
<span class="t" style="left:196.75px;top:219px;font-size:14px;letter-spacing:-1.100px;color:#555;">2</span>
<span class="t" style="left:252.40px;top:219px;font-size:14px;letter-spacing:-0.100px;color:#555;">1</span>
<span class="t" style="left:365.70px;top:219px;font-size:14px;letter-spacing:-0.100px;color:#555;">1</span>
<span class="t" style="left:423.35px;top:219px;font-size:14px;letter-spacing:-1.100px;color:#555;">2</span>
<span class="t" style="left:480.00px;top:219px;font-size:14px;letter-spacing:-1.100px;color:#555;">3</span>
<span class="t" style="left:536.65px;top:219px;font-size:14px;letter-spacing:-1.100px;color:#555;">4</span>
<span class="t" style="left:593.30px;top:219px;font-size:14px;letter-spacing:-1.100px;color:#555;">5</span>
<span class="t" style="left:649.95px;top:219px;font-size:14px;letter-spacing:-1.100px;color:#555;">6</span>
<span class="t" style="left:706.60px;top:219px;font-size:14px;letter-spacing:-1.100px;color:#555;">7</span>
<span class="t" style="left:763.25px;top:219px;font-size:14px;letter-spacing:-1.100px;color:#555;">8</span>
<span class="t" style="left:819.90px;top:219px;font-size:14px;letter-spacing:-1.100px;color:#555;">9</span>
<span class="t" style="left:871.80px;top:219px;font-size:14px;letter-spacing:-0.386px;color:#555;">10</span>
<span class="t" style="left:928.45px;top:219px;font-size:14px;letter-spacing:0.653px;color:#555;">11</span>
<span class="t" style="left:985.10px;top:219px;font-size:14px;letter-spacing:-0.386px;color:#555;">12</span>
<span class="t" style="left:1041.75px;top:219px;font-size:14px;letter-spacing:-0.386px;color:#555;">13</span>
<span class="t" style="left:1098.40px;top:219px;font-size:14px;letter-spacing:-0.386px;color:#555;">14</span>
<span class="t" style="left:1155.05px;top:219px;font-size:14px;letter-spacing:-0.386px;color:#555;">15</span>
<span class="t" style="left:1211.70px;top:219px;font-size:14px;letter-spacing:-0.386px;color:#555;">16</span>
<span class="t" style="left:1268.35px;top:219px;font-size:14px;letter-spacing:-0.386px;color:#555;">17</span>
<span class="t" style="left:141.05px;top:219px;font-size:14px;letter-spacing:-1.100px;color:#555;">3</span>
<span class="t" style="left:12.75px;top:265px;font-size:13.5px;color:#555;transform:rotate(-90deg);transform-origin:3.75px 6.58px;">2</span>
<span class="t" style="left:11.75px;top:322px;font-size:13.5px;color:#555;transform:rotate(-90deg);transform-origin:3.75px 6.58px;">1</span>
<span class="t" style="left:11.75px;top:435px;font-size:13.5px;color:#555;transform:rotate(-90deg);transform-origin:3.75px 6.58px;">1</span>
<span class="t" style="left:12.75px;top:492px;font-size:13.5px;color:#555;transform:rotate(-90deg);transform-origin:3.75px 6.58px;">2</span>
<span class="t" style="left:12.75px;top:548px;font-size:13.5px;color:#555;transform:rotate(-90deg);transform-origin:3.75px 6.58px;">3</span>
<span class="t" style="left:12.75px;top:605px;font-size:13.5px;color:#555;transform:rotate(-90deg);transform-origin:3.75px 6.58px;">4</span>
<span class="t" style="left:12.75px;top:662px;font-size:13.5px;color:#555;transform:rotate(-90deg);transform-origin:3.75px 6.58px;">5</span>
<div class="a" style="left:754px;top:210px;width:440px;height:281px;background:#fff;border:1px solid #c6c6c6;box-shadow:2px 2px 4px rgba(0,0,0,0.18)"></div>
<div class="a" style="left:765px;top:253px;width:144px;height:191px;background:#fff;border:1px solid #ababab"></div>
<div class="a" style="left:760px;top:450px;width:428px;height:1px;background:#e1e1e1"></div>
<svg width="1463" height="667" viewBox="0 0 1463 667" style="left:0;top:0"><circle cx="784.6" cy="296.2" r="2.700" fill="#111"/><path d="M789.500 296.59999999999997h13" stroke="#111" stroke-width="2.100"/><path d="M800.500 292.59999999999997l4.800 4-4.800 4z" fill="#111"/><circle cx="784.6" cy="321.2" r="2.700" fill="#111"/><path d="M789.500 321.59999999999997h13" stroke="#111" stroke-width="2.100"/><path d="M800.500 317.59999999999997l4.800 4-4.800 4z" fill="#111"/><circle cx="784.6" cy="346.6" r="2.700" fill="#111"/><path d="M789.500 347.0h13" stroke="#111" stroke-width="2.100"/><path d="M800.500 343.0l4.800 4-4.800 4z" fill="#111"/><circle cx="784.6" cy="371.8" r="2.700" fill="#111"/><path d="M789.500 372.2h13" stroke="#111" stroke-width="2.100"/><path d="M800.500 368.2l4.800 4-4.800 4z" fill="#111"/><circle cx="784.6" cy="397.2" r="2.700" fill="#111"/><path d="M789.500 397.59999999999997h13" stroke="#111" stroke-width="2.100"/><path d="M800.500 393.59999999999997l4.800 4-4.800 4z" fill="#111"/><circle cx="784.6" cy="422.6" r="2.700" fill="#111"/><path d="M789.500 423.0h13" stroke="#111" stroke-width="2.100"/><path d="M800.500 419.0l4.800 4-4.800 4z" fill="#111"/><circle cx="777" cy="470.700" r="10.700" fill="#4477b0"/></svg>
<span class="t" style="left:766.70px;top:223px;font-size:17.3px;letter-spacing:0.380px;color:#444;font-weight:700;">Отобразить все знаки (Ctrl+*)</span>
<span class="t" style="left:922.00px;top:258px;font-size:17.5px;letter-spacing:0.191px;color:#6c6c6c;">Отображение знаков абзаца и</span>
<span class="t" style="left:922.00px;top:283px;font-size:17.5px;letter-spacing:0.290px;color:#666666;">других скрытых знаков</span>
<span class="t" style="left:922.00px;top:307px;font-size:17.5px;letter-spacing:0.197px;color:#666666;">форматирования.</span>
<span class="t" style="left:922.00px;top:358px;font-size:17.5px;letter-spacing:0.132px;color:#666666;">Это особенно полезно для</span>
<span class="t" style="left:922.00px;top:383px;font-size:17.5px;letter-spacing:0.110px;color:#666666;">сложных действий с разметкой.</span>
<span class="t" style="left:796.50px;top:465px;font-size:17.5px;letter-spacing:0.155px;color:#3a6290;font-weight:700;">Дополнительные сведения</span>
<span class="t" style="left:771.00px;top:264px;font-size:16px;letter-spacing:0.455px;color:#333;">Microsoft·Office¶</span>
<span class="t" style="left:811.70px;top:288px;font-size:16px;letter-spacing:0.641px;color:#3a2a3a;">Word¶</span>
<span class="t" style="left:810.70px;top:313px;font-size:16px;letter-spacing:-0.365px;color:#3a2a3a;">Excel¶</span>
<span class="t" style="left:810.70px;top:339px;font-size:16px;letter-spacing:0.398px;color:#3a2a3a;">PowerPoint¶</span>
<span class="t" style="left:811.70px;top:364px;font-size:16px;letter-spacing:0.366px;color:#3a2a3a;">Outlook¶</span>
<span class="t" style="left:811.70px;top:389px;font-size:16px;letter-spacing:-0.545px;color:#3a2a3a;">Access¶</span>
<span class="t" style="left:810.70px;top:415px;font-size:16px;letter-spacing:0.312px;color:#3a2a3a;">InfoPath¶</span>
<span class="t" style="left:771.30px;top:461px;font-size:21px;letter-spacing:-1.100px;color:#fff;font-weight:700;">?</span>
<div class="red" style="left:87px;top:79px;width:107px;height:5px"></div>
<div class="red" style="left:742px;top:125.600px;width:59px;height:5.400px"></div>
<div class="red" style="left:591px;top:210.800px;width:78px;height:5.400px"></div>
</body></html>
